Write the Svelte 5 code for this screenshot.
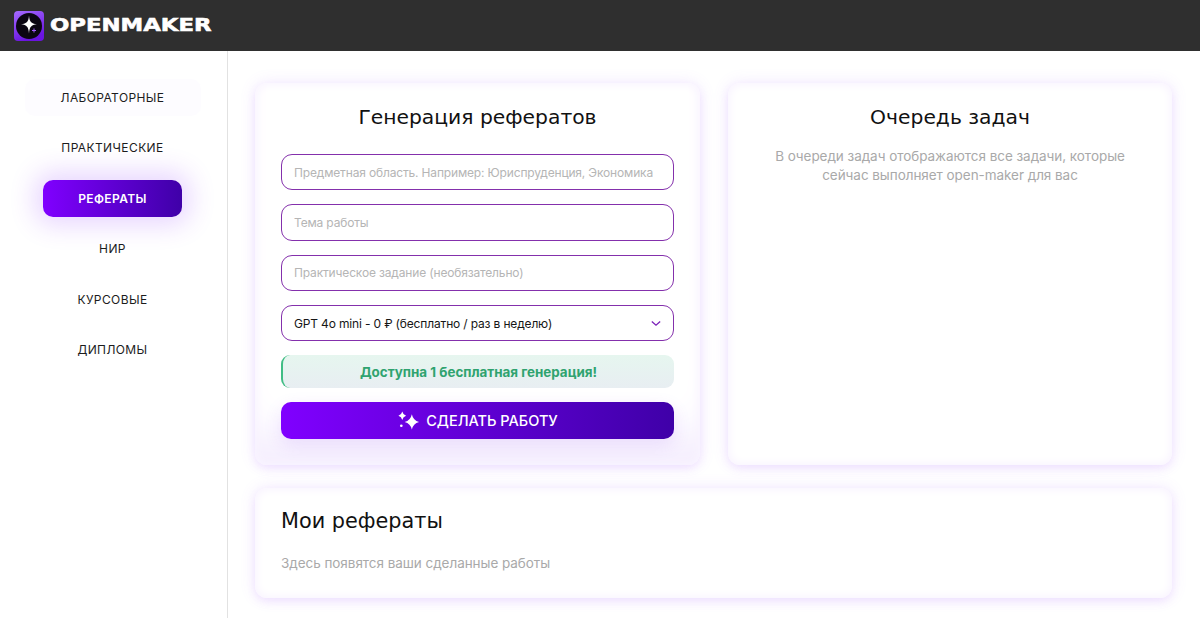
<script>
  const nav = [
    { label: 'ЛАБОРАТОРНЫЕ', hint: true },
    { label: 'ПРАКТИЧЕСКИЕ' },
    { label: 'РЕФЕРАТЫ', active: true },
    { label: 'НИР' },
    { label: 'КУРСОВЫЕ' },
    { label: 'ДИПЛОМЫ' }
  ];
  const fields = [
    'Предметная область. Например: Юриспруденция, Экономика',
    'Тема работы',
    'Практическое задание (необязательно)'
  ];
</script>

<div class="page">
  <header class="topbar">
    <div class="logo-mark">
      <svg viewBox="0 0 30 30" width="30" height="30">
        <defs>
          <linearGradient id="lg" x1="0" y1="0" x2="0.4" y2="1">
            <stop offset="0" stop-color="#a56bff" />
            <stop offset="1" stop-color="#6a14e0" />
          </linearGradient>
        </defs>
        <rect width="30" height="30" rx="4" fill="url(#lg)" />
        <circle cx="15" cy="15" r="13" fill="#0b0612" />
        <path d="M15 4.500 C15.500 10.800 17 12.500 23 13.200 C17 14 15.500 15.800 15 22.500 C14.500 15.800 13 14 7 13.200 C13 12.500 14.500 10.800 15 4.500Z" fill="#fff" />
        <path d="M20 17.500v4M18 19.500h4" stroke="#a45cff" stroke-width="1" />
      </svg>
    </div>
    <span class="brand">OPENMAKER</span>
  </header>

  <div class="body">
    <aside class="side">
      {#each nav as item}
        <a class="nav" class:active={item.active} class:hint={item.hint} href="#top">{item.label}</a>
      {/each}
    </aside>

    <main class="main">
      <div class="top-row">
        <section class="card form-card">
          <h2>Генерация рефератов</h2>
          <div class="form">
            {#each fields as f}
              <input class="field" placeholder={f} />
            {/each}
            <div class="field select">
              <span>GPT 4o mini - 0 ₽ (бесплатно / раз в неделю)</span>
              <svg viewBox="0 0 12 8" width="10" height="7"><path d="M1 1.500l5 4.500 5-4.500" fill="none" stroke="#7a1fb8" stroke-width="1.500" /></svg>
            </div>
            <div class="notice">Доступна 1 бесплатная генерация!</div>
            <button class="submit">
              <svg viewBox="0 0 24 24" width="23" height="23" fill="#fff">
                <path d="M15.500 5.500Q16.800 12 23 13.500Q16.800 15 15.500 21.500Q14.200 15 8 13.500Q14.200 12 15.500 5.500z" />
                <path d="M5.500 2.500Q6.300 6 9.500 7Q6.300 8 5.500 11.500Q4.700 8 1.500 7Q4.700 6 5.500 2.500z" />
                <circle cx="4.500" cy="17.500" r="1.400" />
              </svg>
              СДЕЛАТЬ РАБОТУ
            </button>
          </div>
        </section>

        <section class="card queue-card">
          <h2>Очередь задач</h2>
          <p class="muted centered">В очереди задач отображаются все задачи, которые сейчас выполняет open-maker для вас</p>
        </section>
      </div>

      <section class="card works">
        <h2>Мои рефераты</h2>
        <p class="muted">Здесь появятся ваши сделанные работы</p>
      </section>
    </main>
  </div>
</div>

<style>
  :global(body) {
    margin: 0;
    background: #fff;
    font-family: Inter, "Noto Sans", sans-serif;
  }
  .page {
    width: 1200px;
    height: 618px;
    overflow: hidden;
    display: flex;
    flex-direction: column;
  }
  .topbar {
    height: 51px;
    flex: none;
    background: #2f2f2f;
    display: flex;
    align-items: center;
    padding-left: 14px;
    gap: 6px;
    box-sizing: border-box;
  }
  .logo-mark {
    width: 30px;
    height: 30px;
    display: flex;
  }
  .brand {
    font-family: "DejaVu Sans", sans-serif;
    font-weight: 700;
    font-size: 18.500px;
    line-height: 1;
    color: #fff;
    -webkit-text-stroke: 0.6px #fff;
    white-space: nowrap;
    transform: scaleX(1.23);
    transform-origin: left center;
  }
  .body {
    flex: 1;
    display: flex;
    min-height: 0;
  }
  .side {
    width: 228px;
    flex: none;
    box-sizing: border-box;
    border-right: 1px solid #e2e2e2;
    padding: 28px 2px 0 0;
    display: flex;
    flex-direction: column;
    align-items: center;
    gap: 13.450px;
  }
  .nav {
    width: 139px;
    height: 37px;
    border-radius: 10px;
    display: flex;
    align-items: center;
    justify-content: center;
    color: #1c1c1c;
    text-decoration: none;
    font-size: 12px;
    font-weight: 400;
    letter-spacing: 0.4px;
  }
  .nav.hint {
    width: 176px;
    background: #fdfcff;
  }
  .nav.active {
    color: #fff;
    font-weight: 600;
    letter-spacing: 0.4px;
    background: linear-gradient(90deg, #8000ff, #3f00a8);
    box-shadow: 0 0 26px 8px rgba(140, 50, 255, 0.2);
  }
  .main {
    flex: 1;
    padding: 32px 28px 0 27px;
    display: flex;
    flex-direction: column;
    gap: 23px;
    min-width: 0;
  }
  .top-row {
    display: grid;
    grid-template-columns: 445px 444px;
    gap: 28px;
  }
  .card {
    box-sizing: border-box;
    background: #fff;
    border-radius: 12px;
    box-shadow:
      0 0 16px rgba(165, 90, 255, 0.14),
      0 4px 8px rgba(165, 90, 255, 0.1),
      inset 0 0 8px 2px #f9f4ff;
  }
  .form-card {
    height: 382px;
    padding: 20px 26px 0;
    box-shadow:
      0 0 16px rgba(165, 90, 255, 0.14),
      0 4px 8px rgba(165, 90, 255, 0.1),
      inset 0 0 8px 2px #f9f4ff,
      inset 0 -50px 40px -20px #f5eefe;
  }
  h2 {
    margin: 0;
    font-family: "DejaVu Sans", sans-serif;
    font-weight: 400;
    font-size: 20.300px;
    line-height: 28px;
    color: #111;
    text-align: center;
  }
  .form {
    margin-top: 23px;
    display: flex;
    flex-direction: column;
    gap: 14px;
  }
  .field {
    box-sizing: border-box;
    width: 393px;
    height: 36.300px;
    margin: 0;
    padding: 0 12px;
    background: #fff;
    border: 1px solid #8430ac;
    border-radius: 11px;
    font: 12px Inter, sans-serif;
    letter-spacing: -0.16px;
    outline: none;
    display: block;
  }
  .field::placeholder {
    color: #b5b5b5;
    opacity: 1;
  }
  .select {
    display: flex;
    align-items: center;
    justify-content: space-between;
    color: #161616;
  }
  .notice {
    box-sizing: border-box;
    width: 393px;
    height: 33px;
    display: flex;
    align-items: center;
    justify-content: center;
    border-left: 2px solid #41bd85;
    border-radius: 9px;
    background: linear-gradient(#e6f6ef, #e8eef2);
    color: #2fa36f;
    font-size: 13.400px;
    font-weight: 700;
  }
  .submit {
    width: 393px;
    height: 36.500px;
    border: 0;
    border-radius: 10px;
    background: linear-gradient(90deg, #8000ff, #3f00a8);
    color: #fff;
    font: 500 14.500px Inter, sans-serif;
    display: flex;
    align-items: center;
    justify-content: center;
    gap: 6px;
    box-shadow: 0 6px 18px rgba(120, 40, 240, 0.12);
    padding: 0;
  }
  .queue-card {
    height: 382px;
    padding: 20px 45px 0;
  }
  .muted {
    margin: 0;
    color: #a9a9a9;
    font-size: 13.500px;
    letter-spacing: -0.05px;
    line-height: 19px;
  }
  .centered {
    text-align: center;
    margin-top: 16px;
  }
  .works {
    height: 110px;
    padding: 19px 26px 0;
  }
  .works h2 {
    text-align: left;
    font-size: 20.800px;
  }
  .works .muted {
    margin-top: 19px;
  }
</style>
